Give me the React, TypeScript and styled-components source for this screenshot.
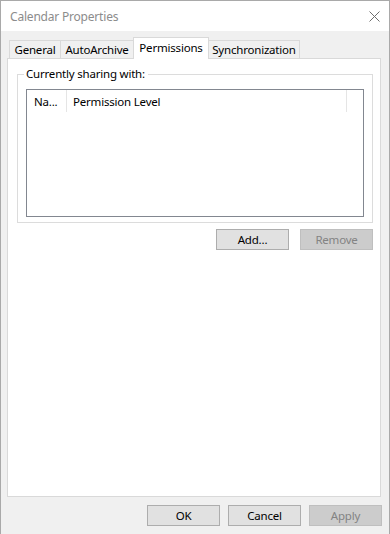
import styled, { createGlobalStyle } from 'styled-components';

const GlobalStyle = createGlobalStyle`
  html, body {
    margin: 0;
    padding: 0;
    background: #f0f0f0;
  }
  * {
    box-sizing: border-box;
  }
`;

const Window = styled.div`
  width: 390px;
  height: 534px;
  display: flex;
  flex-direction: column;
  background: #f0f0f0;
  border: 1px solid #a9a9a9;
  border-bottom: none;
  font-family: 'Noto Sans', 'Liberation Sans', sans-serif;
  font-size: 11.5px;
  letter-spacing: -0.2px;
  color: #000;
`;

const TitleBar = styled.div`
  height: 30px;
  flex: none;
  display: flex;
  align-items: center;
  justify-content: space-between;
  padding: 0 9px 0 9px;
  background: #fff;
`;

const Title = styled.span`
  color: #8c8c8c;
  font-size: 12px;
`;

const Body = styled.div`
  flex: 1;
  display: flex;
  flex-direction: column;
  padding: 6px 7px 0 6px;
`;

const TabStrip = styled.div`
  display: flex;
  align-items: flex-end;
  height: 21px;
  padding-left: 2px;
`;

const Tab = styled.div<{ $active?: boolean; $w: number }>`
  width: ${(p) => p.$w}px;
  height: ${(p) => (p.$active ? 22 : 18)}px;
  margin-left: -1px;
  margin-bottom: ${(p) => (p.$active ? -1 : 0)}px;
  position: relative;
  z-index: ${(p) => (p.$active ? 2 : 1)};
  display: flex;
  align-items: center;
  justify-content: center;
  padding-bottom: ${(p) => (p.$active ? 3 : 0)}px;
  background: ${(p) => (p.$active ? '#fff' : '#f0f0f0')};
  border: 1px solid #d9d9d9;
  border-bottom: none;
  white-space: nowrap;
  &:first-child {
    margin-left: 0;
  }
`;

const Panel = styled.div`
  height: 439px;
  margin-right: 1px;
  display: flex;
  flex-direction: column;
  background: #fff;
  border: 1px solid #d9d9d9;
  padding: 0 7px 0 9px;
`;

const GroupBox = styled.div`
  margin-top: 15px;
  border: 1px solid #dcdcdc;
  display: flex;
  flex-direction: column;
  padding: 0 8px 5px 8px;
`;

const GroupLabel = styled.span`
  align-self: flex-start;
  margin: -9px 0 0 -2px;
  padding: 0 3px 0 2px;
  height: 16px;
  line-height: 16px;
  background: #fff;
`;

const ListView = styled.div`
  margin-top: 7px;
  height: 128px;
  border: 1px solid #828790;
  background: #fff;
`;

const HeaderRow = styled.div`
  display: flex;
  height: 22px;
`;

const HeaderCell = styled.div<{ $w?: number }>`
  width: ${(p) => (p.$w ? `${p.$w}px` : 'auto')};
  flex: ${(p) => (p.$w ? 'none' : '1')};
  display: flex;
  align-items: center;
  padding-left: ${(p) => (p.$w === 40 ? 7 : 6)}px;
  border-right: 1px solid #e5e5e5;
  white-space: nowrap;
  overflow: hidden;
  &:last-child {
    border-right: none;
  }
`;

const ButtonRow = styled.div<{ $gap: number }>`
  display: flex;
  justify-content: flex-end;
  gap: ${(p) => p.$gap}px;
`;

const PanelButtons = styled(ButtonRow)`
  margin-top: 6px;
`;

const Footer = styled(ButtonRow)`
  margin-top: 8px;
`;

const Button = styled.button`
  width: 73px;
  height: 21px;
  padding: 0 0 1px;
  font-family: inherit;
  font-size: 11.5px;
  letter-spacing: -0.2px;
  color: #000;
  background: #e1e1e1;
  border: 1px solid #adadad;
  border-radius: 0;
  &:disabled {
    color: #838383;
    background: #cccccc;
    border-color: #bfbfbf;
  }
`;

const tabs = [
  { label: 'General', w: 52 },
  { label: 'AutoArchive', w: 74 },
  { label: 'Permissions', w: 76 },
  { label: 'Synchronization', w: 92 },
];

export default function App(): JSX.Element {
  return (
    <>
      <GlobalStyle />
      <Window>
        <TitleBar>
          <Title>Calendar Properties</Title>
          <svg width="11" height="11" viewBox="0 0 11 11">
            <path d="M0.5 0.5 L10.5 10.5 M10.5 0.5 L0.5 10.5" stroke="#6e6e6e" strokeWidth="1" />
          </svg>
        </TitleBar>
        <Body>
          <TabStrip>
            {tabs.map((t) => (
              <Tab key={t.label} $w={t.w} $active={t.label === 'Permissions'}>
                {t.label}
              </Tab>
            ))}
          </TabStrip>
          <Panel>
            <GroupBox>
              <GroupLabel>Currently sharing with:</GroupLabel>
              <ListView>
                <HeaderRow>
                  <HeaderCell $w={40}>Na...</HeaderCell>
                  <HeaderCell $w={280}>Permission Level</HeaderCell>
                  <HeaderCell />
                </HeaderRow>
              </ListView>
            </GroupBox>
            <PanelButtons $gap={11}>
              <Button>Add...</Button>
              <Button disabled>Remove</Button>
            </PanelButtons>
          </Panel>
          <Footer $gap={8}>
            <Button>OK</Button>
            <Button>Cancel</Button>
            <Button disabled>Apply</Button>
          </Footer>
        </Body>
      </Window>
    </>
  );
}
